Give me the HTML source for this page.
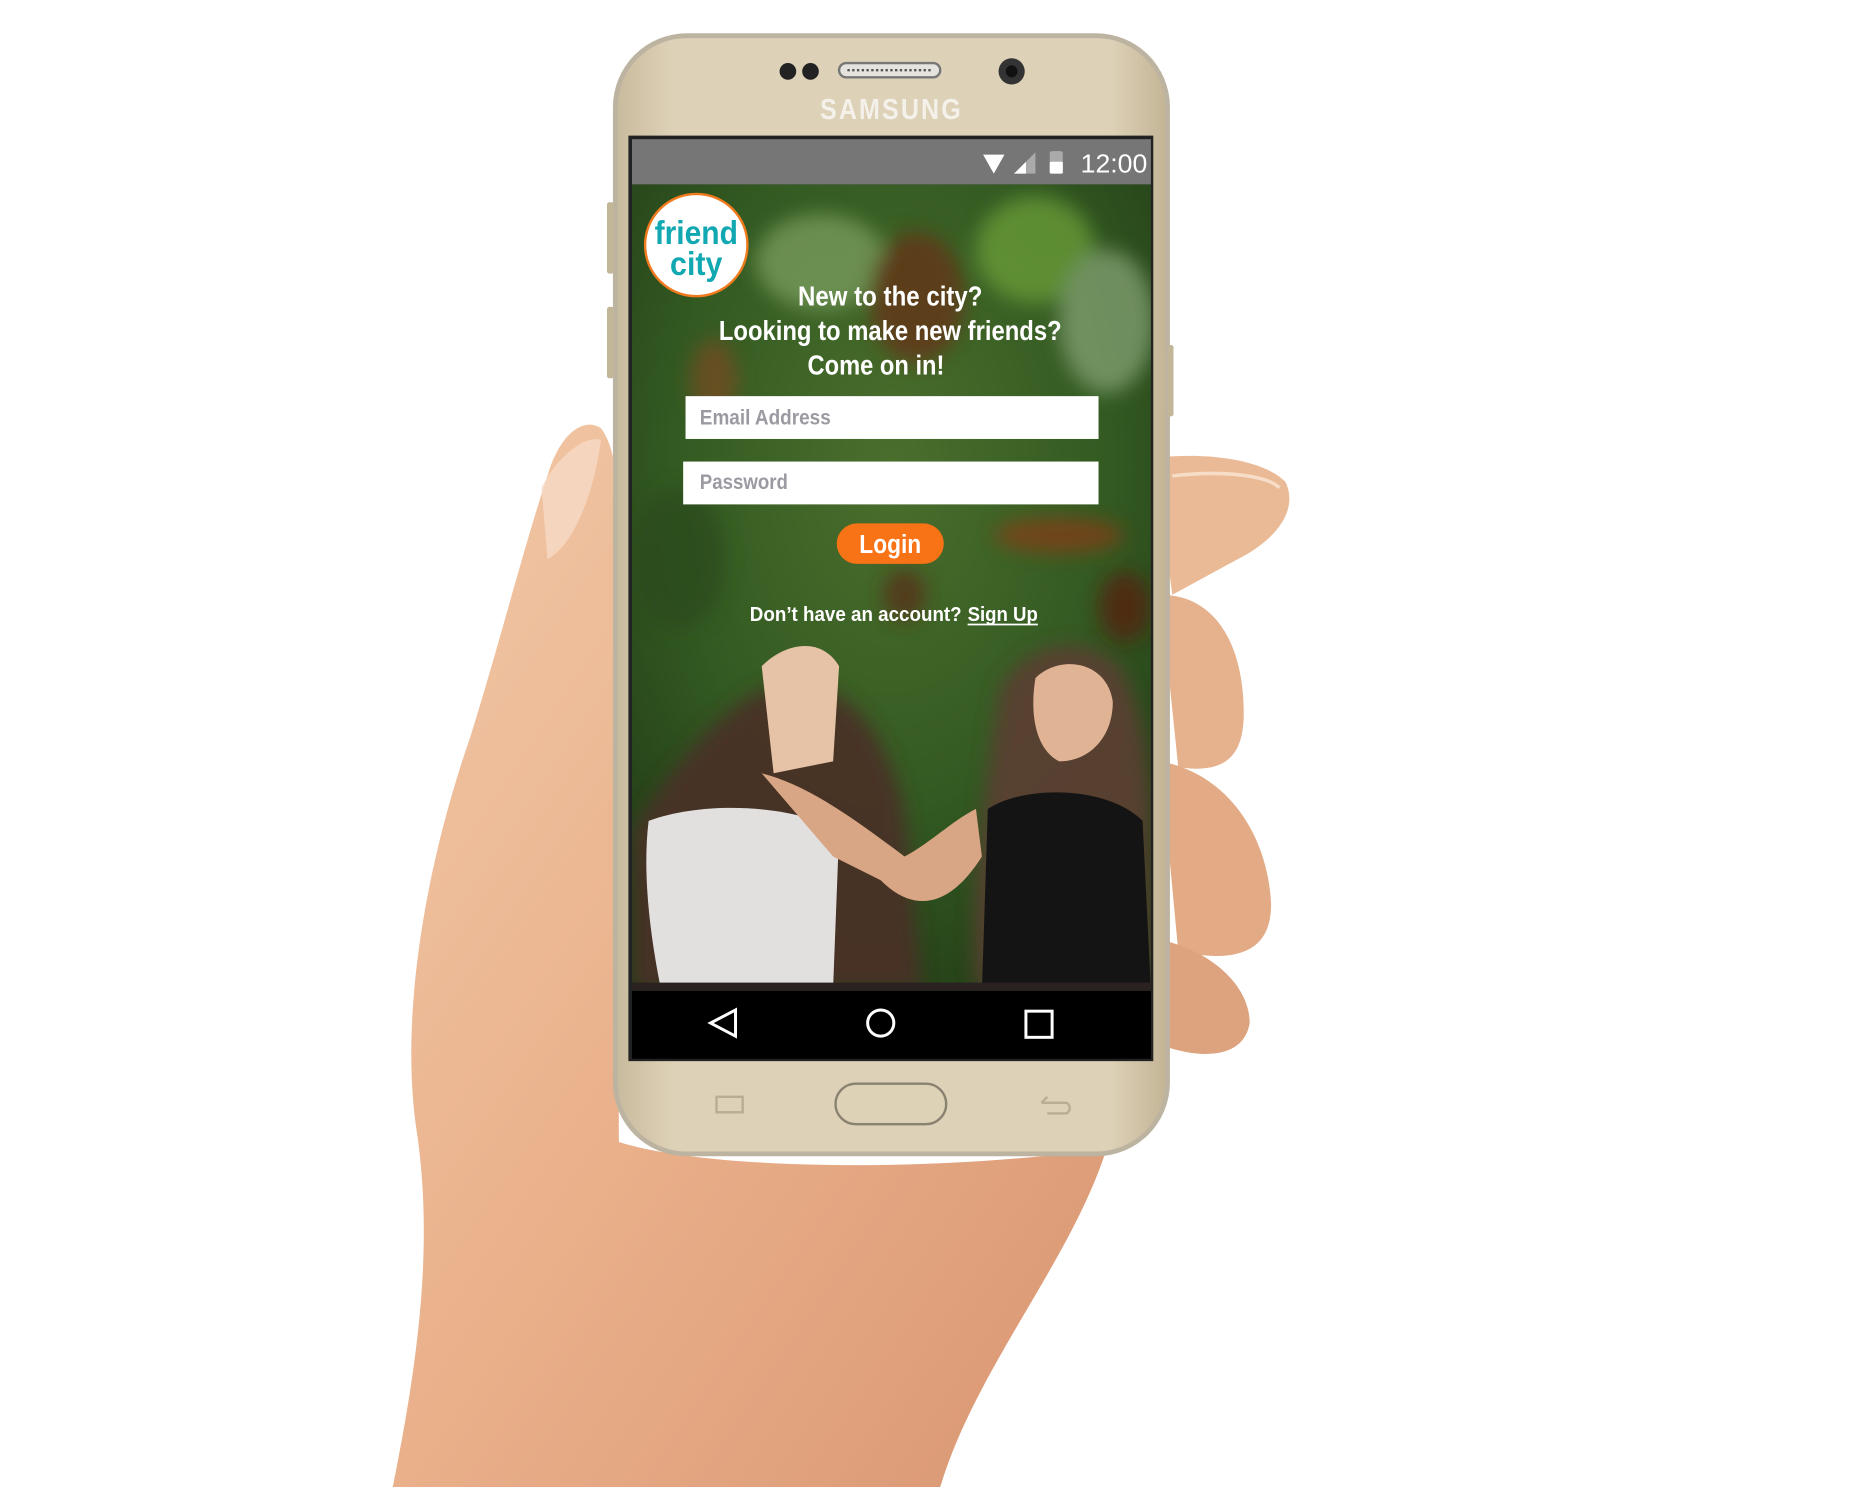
<!DOCTYPE html>
<html><head><meta charset="utf-8"><style>
html,body{margin:0;padding:0;background:#fff;width:1865px;height:1487px;overflow:hidden}
svg{display:block}
text{font-family:"Liberation Sans Narrow","Liberation Sans",sans-serif;font-weight:bold}
</style></head><body>
<svg width="1865" height="1487" viewBox="0 0 1567 1250" preserveAspectRatio="none" xmlns="http://www.w3.org/2000/svg">
<defs>
<linearGradient id="skin" x1="0" y1="0" x2="1" y2="1">
<stop offset="0" stop-color="#f2c9a8"/><stop offset="0.5" stop-color="#e9b08a"/><stop offset="1" stop-color="#d99572"/>
</linearGradient>
<linearGradient id="gold" x1="0" y1="0" x2="1" y2="0">
<stop offset="0" stop-color="#c9bb9d"/><stop offset="0.1" stop-color="#ddd1b7"/><stop offset="0.9" stop-color="#ddd1b7"/><stop offset="1" stop-color="#c4b596"/>
</linearGradient>
<radialGradient id="forest" cx="0.5" cy="0.35" r="0.7">
<stop offset="0" stop-color="#4a6e2c"/><stop offset="0.6" stop-color="#335a22"/><stop offset="1" stop-color="#243f18"/>
</radialGradient>
<filter id="blur"><feGaussianBlur stdDeviation="8"/></filter>
</defs>
<!-- hand -->
<path d="M330 1250 C350 1150 365 1050 350 950 C335 850 360 720 395 620 C420 540 440 460 460 400 C470 365 490 350 505 360 C520 380 520 420 518 470 L520 960 C600 985 800 985 930 965 C900 1060 820 1150 790 1250 Z" fill="url(#skin)"/>
<path d="M970 385 C1010 380 1060 385 1080 405 C1092 430 1070 455 1040 470 L985 500 Z" fill="#eab995"/>
<path d="M975 500 C1020 500 1045 540 1045 600 C1045 640 1025 650 990 645 Z" fill="#e6b28e"/>
<path d="M975 640 C1030 650 1065 700 1068 760 C1068 800 1040 810 990 800 Z" fill="#e2ab86"/>
<path d="M975 790 C1020 800 1050 830 1050 860 C1045 890 1010 890 980 880 Z" fill="#dda27e"/>
<path d="M985 400 C1030 395 1065 400 1075 410" stroke="#f7dcc8" stroke-width="3" fill="none"/>
<path d="M455 410 C470 380 495 365 505 370 C498 420 480 460 460 470 Z" fill="#f6dac6" opacity="0.8"/>
<!-- phone body -->
<rect x="515" y="28" width="468" height="944" rx="62" fill="#bdb3a1"/>
<rect x="519" y="32" width="460" height="936" rx="58" fill="url(#gold)"/>
<rect x="510" y="170" width="6" height="60" rx="2" fill="#c2b698"/>
<rect x="510" y="258" width="6" height="60" rx="2" fill="#c2b698"/>
<rect x="981" y="290" width="5" height="60" rx="2" fill="#c2b698"/>
<circle cx="662" cy="60" r="7" fill="#222"/><circle cx="681" cy="60" r="7" fill="#222"/>
<rect x="705" y="53" width="85" height="12" rx="6" fill="#e6e3de" stroke="#777" stroke-width="2"/>
<line x1="712" y1="59" x2="783" y2="59" stroke="#555" stroke-width="2" stroke-dasharray="2 2"/>
<circle cx="850" cy="60" r="11" fill="#333"/><circle cx="850" cy="60" r="5" fill="#111"/>
<text x="749" y="100" font-size="24" fill="#f4f1ea" text-anchor="middle" textLength="120" lengthAdjust="spacingAndGlyphs" letter-spacing="2">SAMSUNG</text>
<!-- screen -->
<rect x="528" y="114" width="441" height="778" fill="#222"/>
<rect x="531" y="117" width="436" height="38" fill="#767676"/>
<svg x="531" y="155" width="436" height="678" viewBox="531 155 436 678" overflow="hidden">
<rect x="531" y="155" width="436" height="678" fill="url(#forest)"/>
<g opacity="0.7" filter="url(#blur)">
<ellipse cx="690" cy="220" rx="55" ry="40" fill="#7fa364"/>
<ellipse cx="770" cy="250" rx="40" ry="55" fill="#6b2e18"/>
<ellipse cx="870" cy="210" rx="50" ry="45" fill="#6fa33a"/>
<ellipse cx="600" cy="320" rx="20" ry="35" fill="#7a4a22"/>
<ellipse cx="890" cy="450" rx="55" ry="15" fill="#8a3a18"/>
<ellipse cx="930" cy="270" rx="40" ry="60" fill="#8aa77a"/>
<ellipse cx="570" cy="470" rx="40" ry="60" fill="#2a4a1a"/>
<ellipse cx="760" cy="500" rx="18" ry="22" fill="#5a2a18"/>
<ellipse cx="945" cy="510" rx="22" ry="30" fill="#5a1a10"/>
</g>
<g filter="url(#blur)" opacity="0.95">
<path d="M531 700 C560 650 600 600 640 580 C700 560 740 600 760 680 L775 833 L531 833 Z" fill="#4a3326"/>
<path d="M840 580 C860 540 910 530 940 560 C960 590 965 640 967 680 L967 833 L820 833 C815 760 825 680 840 580 Z" fill="#5a4030"/>
</g>
<path d="M640 560 C660 540 690 535 705 560 L700 640 L650 650 Z" fill="#e6c3a6"/>
<path d="M545 690 C600 670 680 680 705 700 L700 830 L555 830 C545 780 540 730 545 690 Z" fill="#e2e0df"/>
<path d="M640 650 C680 660 720 690 760 720 C780 710 800 690 820 680 L825 720 C800 760 770 770 740 740 L700 720 Z" fill="#d8a684"/>
<path d="M870 570 C890 550 930 555 935 590 C935 620 915 640 890 640 C870 630 865 600 870 570 Z" fill="#e0b394"/>
<path d="M830 680 C860 660 930 660 960 690 L967 833 L825 833 Z" fill="#141414"/>
<rect x="531" y="826" width="436" height="7" fill="#2a2220"/>
</svg>
<!-- logo -->
<circle cx="585" cy="206" r="43" fill="#fff" stroke="#f07a1c" stroke-width="2"/>
<text x="585" y="205" font-size="28" fill="#11a8b2" text-anchor="middle" textLength="70" lengthAdjust="spacingAndGlyphs">friend</text>
<text x="585" y="231" font-size="28" fill="#11a8b2" text-anchor="middle" textLength="44" lengthAdjust="spacingAndGlyphs">city</text>
<!-- headline -->
<g fill="#fff" font-size="23" text-anchor="middle">
<text x="748" y="257" textLength="155" lengthAdjust="spacingAndGlyphs">New to the city?</text>
<text x="748" y="286" textLength="288" lengthAdjust="spacingAndGlyphs">Looking to make new friends?</text>
<text x="736" y="315" textLength="115" lengthAdjust="spacingAndGlyphs">Come on in!</text>
</g>
<rect x="576" y="333" width="347" height="36" fill="#fff"/>
<text x="588" y="357" font-size="18" fill="#9a9aa2" textLength="110" lengthAdjust="spacingAndGlyphs">Email Address</text>
<rect x="574" y="388" width="349" height="36" fill="#fff"/>
<text x="588" y="411" font-size="18" fill="#9a9aa2" textLength="74" lengthAdjust="spacingAndGlyphs">Password</text>
<rect x="703" y="440" width="90" height="34" rx="17" fill="#f87216"/>
<text x="748" y="465" font-size="22" fill="#fff" text-anchor="middle" textLength="52" lengthAdjust="spacingAndGlyphs">Login</text>
<text x="630" y="522" font-size="17" fill="#fff" textLength="178" lengthAdjust="spacingAndGlyphs">Don’t have an account?</text>
<text x="813" y="522" font-size="17" fill="#fff" textLength="59" lengthAdjust="spacingAndGlyphs">Sign Up</text>
<line x1="813" y1="525" x2="872" y2="525" stroke="#fff" stroke-width="1.5"/>
<!-- status icons -->
<path d="M826 130 L844 130 L835 146 Z" fill="#fff"/>
<path d="M852 146 L870 128 L870 146 Z" fill="#aaa"/><path d="M852 146 L862 136 L862 146 Z" fill="#fff"/>
<rect x="882" y="127" width="11" height="19" rx="2" fill="#aaa"/><rect x="882" y="136" width="11" height="10" rx="1" fill="#fff"/>
<text x="936" y="145" font-size="22" fill="#fff" text-anchor="middle" style="font-family:'Liberation Sans';font-weight:normal" textLength="56" lengthAdjust="spacingAndGlyphs">12:00</text>
<!-- nav bar -->
<rect x="531" y="833" width="436" height="57" fill="#000"/>
<path d="M618 849 L618 871 L597 860 Z" fill="none" stroke="#fff" stroke-width="2.5"/>
<circle cx="740" cy="860" r="11" fill="none" stroke="#fff" stroke-width="2.5"/>
<rect x="862" y="850" width="22" height="22" fill="none" stroke="#fff" stroke-width="2.5"/>
<!-- bottom -->
<rect x="702" y="911" width="93" height="34" rx="17" fill="#ddd1b6" stroke="#8a8270" stroke-width="2"/>
<rect x="602" y="922" width="22" height="13" fill="none" stroke="#b8ad95" stroke-width="2"/>
<path d="M875 927 L895 927 C900 927 900 936 895 936 L880 936 M875 927 L880 922" fill="none" stroke="#b8ad95" stroke-width="2"/>
</svg>
</body></html>
